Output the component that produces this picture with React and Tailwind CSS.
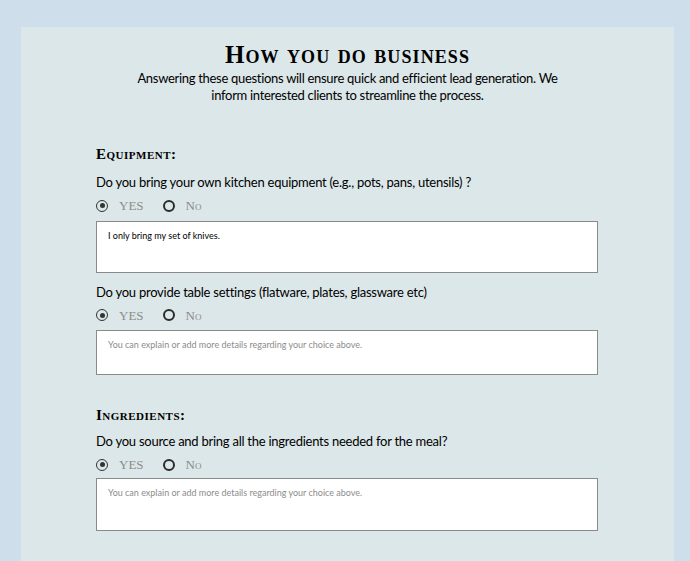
import React, { useState } from 'react';

const serif = { fontFamily: '"Liberation Serif", "DejaVu Serif", serif' };

const Radio = ({ checked, label, onClick }) => (
  <button type="button" onClick={onClick} className="flex items-center gap-[11px]">
    <span
      className={`w-[12px] h-[12px] rounded-full flex items-center justify-center ${
        checked ? 'border-[1.5px] border-[#333]' : 'border-[2.5px] border-[#2b2b2b]'
      }`}
    >
      {checked && <span className="w-[5px] h-[5px] rounded-full bg-[#333]" />}
    </span>
    <span className="text-[13px] text-[#8c8c8c] [font-variant:small-caps]" style={serif}>
      {label}
    </span>
  </button>
);

const Question = ({ text, value, height, gapTop = 'mt-[5px]' }) => {
  const [answer, setAnswer] = useState('yes');
  return (
    <div className="flex flex-col">
      <p className="text-[13px] text-black leading-[18px] tracking-[-0.25px]">{text}</p>
      <div className="flex items-center gap-[19px] mt-[5px]">
        <Radio checked={answer === 'yes'} label="YES" onClick={() => setAnswer('yes')} />
        <Radio checked={answer === 'no'} label="No" onClick={() => setAnswer('no')} />
      </div>
      <textarea
        defaultValue={value}
        placeholder="You can explain or add more details regarding your choice above."
        className={`${gapTop} w-[502px] ${height} bg-white border border-[#8a8a8a] px-[11px] py-[8px] text-[9px] leading-[12px] text-black placeholder:text-[#8c8c8c] resize-none outline-none`}
      />
    </div>
  );
};

const SectionTitle = ({ children }) => (
  <h2 className="text-[15px] font-bold text-black tracking-[0.5px] [font-variant:small-caps] leading-[20px]" style={serif}>
    {children}
  </h2>
);

export default function App() {
  return (
    <div className="min-h-[561px] bg-[#cfdeeb] pt-[27px] pl-[21px] pr-[16px]" style={{ fontFamily: 'Lato, "Open Sans", sans-serif' }}>
      <div className="bg-[#dce7e9] min-h-[534px] pt-[13px] pb-10">
        {/* Header */}
        <div className="text-center">
          <h1 className="text-[25px] font-bold text-black leading-[30px] [font-variant:small-caps] tracking-[1.1px]" style={serif}>
            How you do business
          </h1>
          <p className="text-[13px] text-black leading-[17px] tracking-[-0.3px] max-w-[440px] mx-auto">
            Answering these questions will ensure quick and efficient lead generation. We inform interested clients to streamline the process.
          </p>
        </div>

        <div className="pl-[75px] mt-[40px]">
          <SectionTitle>Equipment:</SectionTitle>
          <div className="mt-[9px] flex flex-col gap-[10px]">
            <Question
              text="Do you bring your own kitchen equipment (e.g., pots, pans, utensils) ?"
              value="I only bring my set of knives."
              height="h-[52px]"
            />
            <Question text="Do you provide table settings (flatware, plates, glassware etc)" height="h-[45px]" />
          </div>

          <div className="mt-[30px]">
            <SectionTitle>Ingredients:</SectionTitle>
            <div className="mt-[7px]">
              <Question
                text="Do you source and bring all the ingredients needed for the meal?"
                height="h-[53px]"
                gapTop="mt-[3px]"
              />
            </div>
          </div>
        </div>
      </div>
    </div>
  );
}
